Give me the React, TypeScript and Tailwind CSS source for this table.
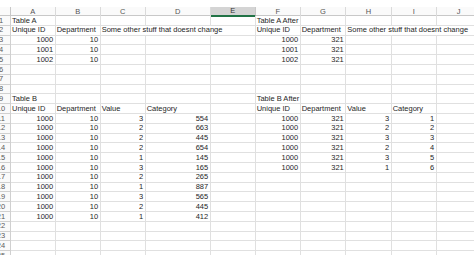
import React from "react";

type Cell = { t: string; r?: boolean; span?: number } | null;

const COLS = ["A", "B", "C", "D", "E", "F", "G", "H", "I", "J"];
const GRID =
  "grid grid-cols-[11px_44.7px_45px_45px_65px_45px_45px_45.6px_45.4px_45px_45px]";

const txt = (t: string): Cell => ({ t });
const num = (t: string | number): Cell => ({ t: String(t), r: true });
const over = (t: string): Cell => ({ t, span: 3 });

function buildRows(): Cell[][] {
  const rows: Cell[][] = [];
  for (let i = 0; i < 25; i++) rows.push(Array(10).fill(null));
  // Table A
  rows[0][0] = txt("Table A");
  rows[0][5] = txt("Table A After");
  rows[1][0] = txt("Unique ID");
  rows[1][1] = txt("Department");
  rows[1][2] = over("Some other stuff that doesnt change");
  rows[1][5] = txt("Unique ID");
  rows[1][6] = txt("Department");
  rows[1][7] = over("Some other stuff that doesnt change");
  ["1000", "1001", "1002"].forEach((id, k) => {
    rows[2 + k][0] = num(id);
    rows[2 + k][1] = num(10);
    rows[2 + k][5] = num(id);
    rows[2 + k][6] = num(321);
  });
  // Table B
  rows[8][0] = txt("Table B");
  rows[8][5] = txt("Table B After");
  rows[9][0] = txt("Unique ID");
  rows[9][1] = txt("Department");
  rows[9][2] = txt("Value");
  rows[9][3] = txt("Category");
  rows[9][5] = txt("Unique ID");
  rows[9][6] = txt("Department");
  rows[9][7] = txt("Value");
  rows[9][8] = txt("Category");
  const vals = [3, 2, 2, 2, 1, 3, 2, 1, 3, 2, 1];
  const cats = [554, 663, 445, 654, 145, 165, 265, 887, 565, 445, 412];
  vals.forEach((v, k) => {
    rows[10 + k][0] = num(1000);
    rows[10 + k][1] = num(10);
    rows[10 + k][2] = num(v);
    rows[10 + k][3] = num(cats[k]);
  });
  const av = [3, 2, 3, 2, 3, 1];
  av.forEach((v, k) => {
    rows[10 + k][5] = num(1000);
    rows[10 + k][6] = num(321);
    rows[10 + k][7] = num(v);
    rows[10 + k][8] = num(k + 1);
  });
  return rows;
}

export default function App() {
  const rows = buildRows();
  return (
    <div className="w-[474px] h-[255px] overflow-hidden bg-white font-['Liberation_Sans',Arial,sans-serif] text-[7.5px] text-[#262626]">
      <div className="w-[482px]">
        <div className="h-[7px] bg-white" />
        {/* column header */}
        <div className={`${GRID} h-[9px] border-b border-[#c8c8c8] bg-[#fafafa]`}>
          <div className="border-r border-[#c8c8c8]" />
          {COLS.map((c) =>
            c === "E" ? (
              <div
                key={c}
                className="flex items-center justify-center border-r border-[#c8c8c8] bg-[#d4d4d4] border-b-2 border-b-[#217346] text-[#333] leading-none"
              >
                {c}
              </div>
            ) : (
              <div
                key={c}
                className="flex items-center justify-center border-r border-[#dadada] text-[#555] leading-none"
              >
                {c}
              </div>
            )
          )}
        </div>
        {rows.map((row, ri) => {
          const cells: React.ReactNode[] = [];
          let skip = 0;
          row.forEach((cell, ci) => {
            if (skip > 0) {
              skip--;
              return;
            }
            if (cell && cell.span) {
              skip = cell.span - 1;
              cells.push(
                <div
                  key={ci}
                  className="col-span-3 flex items-center pl-[1px] border-r border-b border-[#e0e0e0] whitespace-nowrap overflow-hidden leading-none"
                >
                  {cell.t}
                </div>
              );
              return;
            }
            cells.push(
              <div
                key={ci}
                className={`flex items-center border-r border-b border-[#e0e0e0] whitespace-nowrap overflow-hidden leading-none ${
                  cell?.r ? "justify-end pr-[1.5px]" : "pl-[1px]"
                }`}
              >
                {cell?.t ?? ""}
              </div>
            );
          });
          return (
            <div key={ri} className={`${GRID} h-[9.8px]`}>
              <div className="overflow-hidden border-r border-b border-[#d0d0d0] bg-[#fafafa]">
                <div className="-ml-[9px] w-[20px] h-full flex items-center justify-center text-[#5a5a5a] leading-none">
                  {ri + 1}
                </div>
              </div>
              {cells}
            </div>
          );
        })}
      </div>
    </div>
  );
}
